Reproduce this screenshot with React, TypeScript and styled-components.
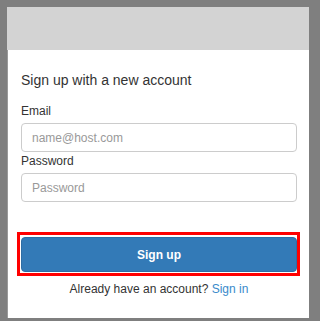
import React from 'react'
import styled, { createGlobalStyle } from 'styled-components'

const GlobalStyle = createGlobalStyle`
  html, body {
    margin: 0;
    padding: 0;
    width: 317px;
    height: 321px;
    overflow: hidden;
    background: #7f7f7f;
  }
  body {
    font-family: "Liberation Sans", Arial, sans-serif;
    color: #333;
  }
`

const Frame = styled.div`
  box-sizing: border-box;
  width: 317px;
  height: 321px;
  padding: 7px 8px 3px 7px;
  background: #7f7f7f;
`

const Card = styled.div`
  display: flex;
  flex-direction: column;
  height: 100%;
  background: #fff;
  box-shadow: inset 1px 1px 0 #9a9a9a;
`

const Banner = styled.div`
  height: 43px;
  flex: none;
  background: #d3d3d3;
`

const Body = styled.form`
  display: flex;
  flex-direction: column;
  padding: 22px 12px 0 14px;
`

const Title = styled.h2`
  margin: 0 0 15px;
  font-size: 14px;
  line-height: 17px;
  font-weight: normal;
  color: #333;
`

const Label = styled.label`
  display: block;
  margin-bottom: 4px;
  font-size: 12px;
  line-height: 15px;
  color: #333;
`

const Input = styled.input`
  box-sizing: border-box;
  width: 100%;
  height: 29px;
  margin: 0 0 2px;
  padding: 0 10px;
  border: 1px solid #ccc;
  border-radius: 4px;
  font-family: "Liberation Sans", Arial, sans-serif;
  font-size: 12px;
  color: #555;
  background: #fff;
  &::placeholder {
    color: #999;
  }
`

const Highlight = styled.div`
  margin: 28px -3px 0 -4px;
  padding: 2px 0 1px 1px;
  border: 3px solid #ff0000;
`

const SubmitButton = styled.button`
  display: block;
  width: 100%;
  height: 35px;
  border: 1px solid #2e6da4;
  border-radius: 4px;
  background: #337ab7;
  color: #fff;
  font-family: "Liberation Sans", Arial, sans-serif;
  font-size: 12px;
  font-weight: bold;
  cursor: pointer;
`

const Footer = styled.p`
  margin: 6px 0 0;
  text-align: center;
  font-size: 12px;
  line-height: 15px;
  color: #333;
`

const Link = styled.a`
  color: #3a8acb;
  text-decoration: none;
`

export default function App() {
  return (
    <>
      <GlobalStyle />
      <Frame>
        <Card>
          <Banner />
          <Body onSubmit={(e) => e.preventDefault()}>
            <Title>{'Sign up with a new account'}</Title>
            <Label htmlFor="email">{'Email'}</Label>
            <Input id="email" type="email" placeholder="name@host.com" />
            <Label htmlFor="password">{'Password'}</Label>
            <Input id="password" type="password" placeholder="Password" />
            <Highlight>
              <SubmitButton type="submit">{'Sign up'}</SubmitButton>
            </Highlight>
            <Footer>
              {'Already have an account? '}
              <Link href="#">{'Sign in'}</Link>
            </Footer>
          </Body>
        </Card>
      </Frame>
    </>
  )
}
